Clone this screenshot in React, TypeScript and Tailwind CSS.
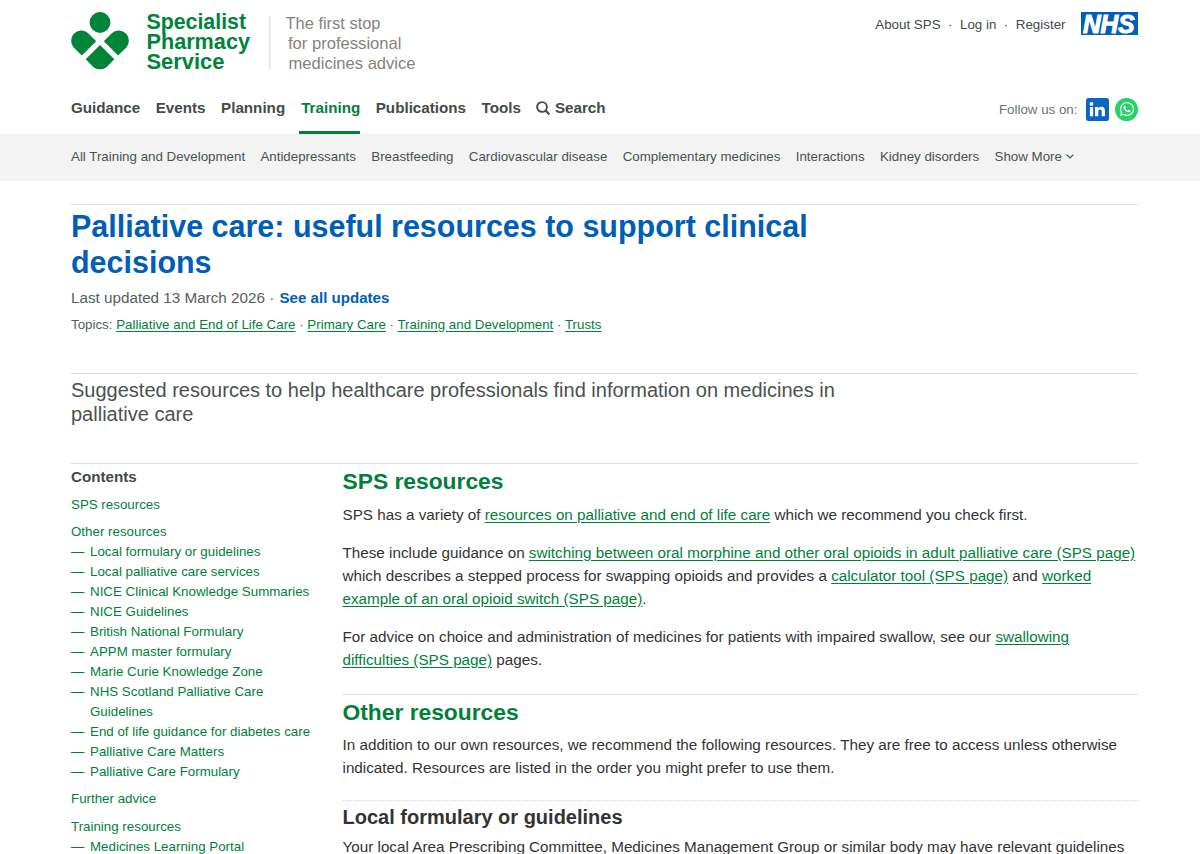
import type { ReactNode } from "react";
import { FaWhatsapp } from "react-icons/fa";

const navItems = ["Guidance", "Events", "Planning", "Training", "Publications", "Tools"];

const subNavItems = [
  "All Training and Development",
  "Antidepressants",
  "Breastfeeding",
  "Cardiovascular disease",
  "Complementary medicines",
  "Interactions",
  "Kidney disorders",
];

const topics = [
  "Palliative and End of Life Care",
  "Primary Care",
  "Training and Development",
  "Trusts",
];

const contents = [
  { title: "SPS resources", children: [] },
  {
    title: "Other resources",
    children: [
      "Local formulary or guidelines",
      "Local palliative care services",
      "NICE Clinical Knowledge Summaries",
      "NICE Guidelines",
      "British National Formulary",
      "APPM master formulary",
      "Marie Curie Knowledge Zone",
      "NHS Scotland Palliative Care Guidelines",
      "End of life guidance for diabetes care",
      "Palliative Care Matters",
      "Palliative Care Formulary",
    ],
  },
  { title: "Further advice", children: [] },
  { title: "Training resources", children: ["Medicines Learning Portal"] },
];

const Link = ({ children }: { children: ReactNode }) => (
  <a href="#" className="text-[#007f3b] underline underline-offset-2">
    {children}
  </a>
);

const Logo = () => (
  <svg width="350" height="62" viewBox="0 0 350 62" className="block overflow-visible">
    <g fill="#00843a">
      <circle cx="29" cy="10.5" r="10.4" />
      <path d="M10.900 43.600 3.200 35.900C-0.800 31.900-0.800 25.500 3.200 21.500C7.200 17.600 13.400 17.600 17.400 21.500L25.200 29.300Z" />
      <path d="M47.100 43.600 54.800 35.900C58.800 31.900 58.800 25.500 54.800 21.500C50.800 17.600 44.600 17.600 40.600 21.500L32.800 29.300Z" />
      <path d="M29 33 43.300 47.300 36.200 54.400C32.200 58.300 25.800 58.300 21.800 54.400L14.700 47.300Z" />
    </g>
    <g
      fill="#00843a"
      fontFamily="Liberation Sans, Arial, sans-serif"
      fontWeight="700"
      fontSize="22"
    >
      <text x="75.500" y="17.200" textLength="99.500" lengthAdjust="spacingAndGlyphs">Specialist</text>
      <text x="75.500" y="37.200" textLength="103.500" lengthAdjust="spacingAndGlyphs">Pharmacy</text>
      <text x="75.500" y="57.200" textLength="78" lengthAdjust="spacingAndGlyphs">Service</text>
    </g>
    <rect x="198" y="4" width="1.500" height="53" fill="#e3e3e3" />
    <g fill="#85827e" fontFamily="Liberation Sans, Arial, sans-serif" fontSize="16.600">
      <text x="214.500" y="17.400" textLength="95" lengthAdjust="spacingAndGlyphs">The first stop</text>
      <text x="217" y="37.400" textLength="113.500" lengthAdjust="spacingAndGlyphs">for professional</text>
      <text x="217.500" y="57.400" textLength="127" lengthAdjust="spacingAndGlyphs">medicines advice</text>
    </g>
  </svg>
);

const NhsLogo = () => (
  <svg width="57" height="23" viewBox="0 0 57 23" className="overflow-visible">
    <rect width="57" height="23" fill="#005eb8" />
    <text
      x="2"
      y="20.500"
      fill="#fff"
      stroke="#fff"
      strokeWidth="1.100"
      fontFamily="Liberation Sans, Arial, sans-serif"
      fontWeight="700"
      fontStyle="italic"
      fontSize="25"
      textLength="51.500"
      lengthAdjust="spacingAndGlyphs"
    >
      NHS
    </text>
  </svg>
);

const LinkedIn = () => (
  <svg width="23" height="23" viewBox="0 0 23 23">
    <rect width="23" height="23" rx="2.500" fill="#0a66c2" />
    <g fill="#fff">
      <circle cx="5.500" cy="5.900" r="1.900" />
      <path d="M3.900 9H7.100V18.300H3.900Z" />
      <path d="M9 9H12.200V10.300C12.800 9.300 13.900 8.700 15.300 8.700C18.200 8.700 19 10.600 19 13.300V18.300H15.700V14C15.700 12.700 15.600 11.500 14.200 11.500C12.700 11.500 12.300 12.600 12.300 13.900V18.300H9Z" />
    </g>
  </svg>
);

const Header = () => (
  <header>
    <div className="ml-[71px] w-[1067px] h-[134px] flex justify-between">
      <div className="flex flex-col justify-between">
        <div className="pt-3">
          <Logo />
        </div>
        <nav className="flex h-[38px] text-[15.2px] font-bold leading-[23px] text-[#434b48]">
          {navItems.map((item) => (
            <a
              key={item}
              href="#"
              className={
                item === "Training"
                  ? "mr-[15.500px] -ml-[1.500px] pl-[2px] border-b-[3px] border-[#007f3b] text-[#007f3b]"
                  : "mr-[15.500px]"
              }
            >
              {item}
            </a>
          ))}
          <a href="#" className="-ml-[0.500px] flex gap-[5px]">
            <svg width="14" height="14" viewBox="0 0 14 14" className="mt-[5px]">
              <circle cx="6" cy="6" r="4.900" fill="none" stroke="currentColor" strokeWidth="1.900" />
              <path d="M9.500 9.500 13.400 13.400" stroke="currentColor" strokeWidth="2.200" />
            </svg>
            Search
          </a>
        </nav>
      </div>
      <div className="flex flex-col items-end justify-between pt-3 pb-[13px] text-[13.35px]">
        <div className="flex h-[23px] items-center text-[#434b48]">
          <a href="#" className="pt-px">About SPS</a>
          <span className="mx-[7.500px] pt-px">·</span>
          <a href="#" className="pt-px">Log in</a>
          <span className="mx-[7.500px] pt-px">·</span>
          <a href="#" className="mr-[15.500px] pt-px">Register</a>
          <NhsLogo />
        </div>
        <div className="flex items-center text-[#6b7370]">
          <span className="mr-[8.500px] pt-px">Follow us on:</span>
          <LinkedIn />
          <span className="ml-[6px] flex size-[23px] items-center justify-center rounded-full bg-[#25d366] text-white">
            <FaWhatsapp size={16} />
          </span>
        </div>
      </div>
    </div>
    <div className="h-[47px] border-t border-[#eeeeee] bg-[#f3f3f3]">
      <nav className="ml-[71px] flex h-[43px] items-center gap-[15.300px] text-[13.33px] leading-[20px] text-[#4a524f]">
        {subNavItems.map((item) => (
          <a key={item} href="#">
            {item}
          </a>
        ))}
        <a href="#" className="flex items-center gap-1">
          Show More
          <svg width="8" height="5" viewBox="0 0 8 5">
            <path d="M0.600 0.600 4 4 7.400 0.600" fill="none" stroke="currentColor" strokeWidth="1.200" />
          </svg>
        </a>
      </nav>
    </div>
  </header>
);

const Sidebar = () => (
  <aside className="w-[271.500px] shrink-0 pr-[30px]">
    <h2 className="pt-px text-[15.2px] font-bold leading-[23px] text-[#434b48]">Contents</h2>
    <ul className="mt-[6.500px] flex flex-col gap-[7.400px] text-[13.33px] leading-[20px] text-[#007f3b]">
      {contents.map(({ title, children }) => (
        <li key={title}>
          <a href="#">{title}</a>
          <ul>
            {children.map((child) => (
              <li key={child} className="flex">
                <span className="w-[19px] shrink-0">—</span>
                <a href="#">{child}</a>
              </li>
            ))}
          </ul>
        </li>
      ))}
    </ul>
  </aside>
);

const App = () => {
  return (
    <div className="h-[854px] overflow-hidden bg-white font-['Liberation_Sans',Arial,sans-serif] text-[15.24px] leading-[23px] text-[#333333]">
      <Header />
      <main className="ml-[71px] w-[1067px] pt-[23px]">
        <section className="h-[169px] border-t border-[#dedede] pt-[3px] text-[#55605b]">
          <h1 className="w-[800px] text-[30.47px] font-bold leading-[36px] text-[#005eb8]">
            Palliative care: useful resources to support clinical decisions
          </h1>
          <p className="mt-[6px]">
            Last updated 13 March 2026 ·{" "}
            <a href="#" className="ml-[1px] text-[15.1px] font-bold text-[#005eb8]">
              See all updates
            </a>
          </p>
          <p className="mt-[6px] text-[13.34px] leading-[20px]">
            Topics:{" "}
            {topics.map((topic, i) => (
              <span key={topic}>
                {i > 0 && " · "}
                <Link>{topic}</Link>
              </span>
            ))}
          </p>
        </section>
        <section className="h-[90px] border-t border-[#dedede] pt-[4px]">
          <p className="w-[800px] text-[20px] leading-[24px] text-[#4a524f]">
            Suggested resources to help healthcare professionals find information on medicines in
            palliative care
          </p>
        </section>
        <div className="flex border-t border-[#dedede]">
          <Sidebar />
          <article className="w-[795.500px] pt-[3px]">
            <h2 className="text-[22.8px] font-bold leading-[28px] text-[#007f3b]">SPS resources</h2>
            <p className="mt-[8px]">
              SPS has a variety of <Link>resources on palliative and end of life care</Link> which we
              recommend you check first.
            </p>
            <p className="mt-[15px]">
              These include guidance on{" "}
              <Link>
                switching between oral morphine and other oral opioids in adult palliative care (SPS
                page)
              </Link>{" "}
              which describes a stepped process for swapping opioids and provides a{" "}
              <Link>calculator tool (SPS page)</Link> and{" "}
              <Link>worked example of an oral opioid switch (SPS page)</Link>.
            </p>
            <p className="mt-[15px]">
              For advice on choice and administration of medicines for patients with impaired
              swallow, see our <Link>swallowing difficulties (SPS page)</Link> pages.
            </p>
            <div className="mt-[23px] border-t border-[#dedede] pt-[3px]">
              <h2 className="text-[22.8px] font-bold leading-[28px] text-[#007f3b]">
                Other resources
              </h2>
              <p className="mt-[7px]">
                In addition to our own resources, we recommend the following resources. They are free
                to access unless otherwise indicated. Resources are listed in the order you might
                prefer to use them.
              </p>
            </div>
            <div className="mt-[21px] border-t border-dotted border-[#d4d4d4] pt-[4px]">
              <h3 className="text-[20px] font-bold leading-[25px]">Local formulary or guidelines</h3>
              <p className="mt-[5px]">
                Your local Area Prescribing Committee, Medicines Management Group or similar body may
                have relevant guidelines
              </p>
            </div>
          </article>
        </div>
      </main>
    </div>
  );
};

export default App;
